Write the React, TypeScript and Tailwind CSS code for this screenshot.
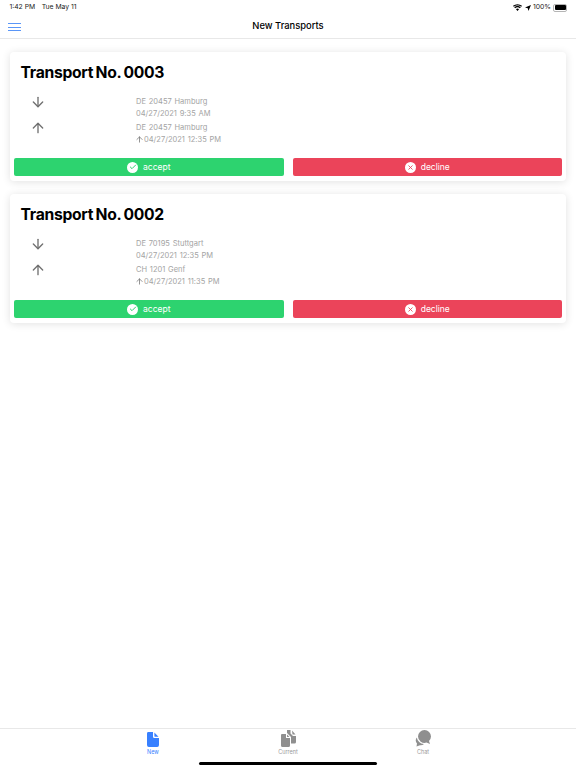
import { ArrowDown, ArrowUp, Check, X } from 'lucide-react';

type Transport = {
  no: string;
  from: string;
  fromTime: string;
  to: string;
  toTime: string;
};

const transports: Transport[] = [
  {
    no: '0003',
    from: 'DE 20457 Hamburg',
    fromTime: '04/27/2021 9:35 AM',
    to: 'DE 20457 Hamburg',
    toTime: '04/27/2021 12:35 PM',
  },
  {
    no: '0002',
    from: 'DE 70195 Stuttgart',
    fromTime: '04/27/2021 12:35 PM',
    to: 'CH 1201 Genf',
    toTime: '04/27/2021 11:35 PM',
  },
];

function StatusBar() {
  return (
    <div className="flex h-[13px] items-center justify-between pl-[9.5px] pr-[9px] pt-[2px] text-[6.8px] text-[#222]">
      <div className="flex gap-[6.5px]">
        <span>1:42 PM</span>
        <span>Tue May 11</span>
      </div>
      <div className="flex items-center gap-[2px]">
        <svg width="9" height="7" viewBox="0 0 18 14" fill="black" aria-hidden="true">
          <path d="M9 14 L6 10.5 A4.5 4.5 0 0 1 12 10.5 Z M4.3 8.7 L2.5 6.6 A9.5 9.5 0 0 1 15.5 6.6 L13.7 8.7 A7 7 0 0 0 4.3 8.7 Z M1.4 5.4 L0 3.6 A14 14 0 0 1 18 3.6 L16.6 5.4 A12 12 0 0 0 1.4 5.4 Z" />
        </svg>
        <svg width="6" height="6" viewBox="0 0 14 14" fill="black" className="ml-[1px]" aria-hidden="true">
          <path d="M14 0 L8 14 L6.5 7.5 L0 6 Z" />
        </svg>
        <span>100%</span>
        <div className="flex items-center rounded-[2px] border border-[#b5b5b5] p-[0.5px]">
          <div className="h-[5px] w-[11px] rounded-[1px] bg-black" />
        </div>
      </div>
    </div>
  );
}

function Header() {
  return (
    <div className="relative flex h-[26px] items-center justify-center border-b border-[#e8e8e8] pt-[1px]">
      <div className="absolute left-[8px] top-[10px] flex w-[13px] flex-col gap-[2.5px]">
        <div className="h-[1px] bg-[#5a96f7]" />
        <div className="h-[1px] bg-[#5a96f7]" />
        <div className="h-[1px] bg-[#5a96f7]" />
      </div>
      <span className="text-[9.4px] font-medium text-black">New Transports</span>
    </div>
  );
}

function TransportCard({ transport }: { transport: Transport }) {
  return (
    <div className="rounded-[4px] bg-white pb-[5px] shadow-[0_1px_8px_rgba(0,0,0,0.12)]">
      <h2 className="pl-[10.5px] pt-[10px] text-[15.7px] leading-[22px] font-bold tracking-[-0.3px] [word-spacing:-1px] text-black">
        Transport No. {transport.no}
      </h2>
      <div className="mt-[12px] flex flex-col gap-[3px] text-[7.5px] leading-[11.5px] tracking-[0.02px] [word-spacing:0.6px] text-[#a3a3a3]">
        <div className="grid grid-cols-[126px_1fr]">
          <div className="-mt-[2px] pl-[20px]">
            <ArrowDown size={16} strokeWidth={2} className="text-[#707070]" />
          </div>
          <div>
            <div>{transport.from}</div>
            <div>{transport.fromTime}</div>
          </div>
        </div>
        <div className="grid grid-cols-[126px_1fr]">
          <div className="-mt-[2px] pl-[20px]">
            <ArrowUp size={16} strokeWidth={2} className="text-[#707070]" />
          </div>
          <div>
            <div>{transport.to}</div>
            <div className="-ml-[1px] flex items-center">
              <ArrowUp size={9} strokeWidth={2} className="text-[#707070]" />
              <span>{transport.toTime}</span>
            </div>
          </div>
        </div>
      </div>
      <div className="mt-[13px] grid grid-cols-2 gap-[9px] px-[4px] text-[8.5px] text-white">
        <div className="flex h-[18px] items-center justify-center gap-[5px] rounded-[2px] bg-[#2dd36f]">
          <div className="flex h-[11px] w-[11px] items-center justify-center rounded-full bg-white">
            <Check size={8} strokeWidth={3} className="text-[#2dd36f]" />
          </div>
          <span>accept</span>
        </div>
        <div className="flex h-[18px] items-center justify-center gap-[5px] rounded-[2px] bg-[#eb445a]">
          <div className="flex h-[11px] w-[11px] items-center justify-center rounded-full bg-white">
            <X size={7} strokeWidth={3} className="text-[#eb445a]" />
          </div>
          <span>decline</span>
        </div>
      </div>
    </div>
  );
}

function TabBar() {
  return (
    <div className="relative flex h-[40px] justify-center border-t border-[#e8e8e8] bg-white text-[5.5px] leading-[7px] text-[#9a9a9a]">
      <div className="flex w-[135px] flex-col items-center pt-[3px] text-[#3880ff]">
        <svg width="12" height="15" viewBox="0 0 13 16" fill="#3880ff" aria-hidden="true">
          <path d="M1.5 0 H6.5 V5 A1.5 1.5 0 0 0 8 6.5 H13 V14 A2 2 0 0 1 11 16 H2 A2 2 0 0 1 0 14 V1.5 A1.5 1.5 0 0 1 1.5 0 Z M8 0.5 L12.5 5 H8.5 A0.5 0.5 0 0 1 8 4.5 Z" />
        </svg>
        <span className="mt-[2px]">New</span>
      </div>
      <div className="flex w-[135px] flex-col items-center pt-[1px]">
        <svg width="15" height="17" viewBox="0 0 15 17" fill="#8f8f8f" aria-hidden="true">
          <path d="M6 0 H9.5 V3.5 L12 6 H15 V12 A1.5 1.5 0 0 1 13.5 13.5 H10 V7 L6 3 Z M11 0.5 L14.5 4.5 H11.5 Z" />
          <path d="M1 4 H5 V8 H9 V15.5 A1.5 1.5 0 0 1 7.5 17 H1.5 A1.5 1.5 0 0 1 0 15.5 V5 A1 1 0 0 1 1 4 Z M6 4.5 L8.5 7 H6 Z" />
        </svg>
        <span className="mt-[2px]">Current</span>
      </div>
      <div className="flex w-[135px] flex-col items-center pt-[1px]">
        <svg width="16" height="17" viewBox="0 0 16 17" fill="#8f8f8f" aria-hidden="true">
          <path d="M9.5 0 A6.5 6.5 0 0 1 16 6.5 A6.5 6.5 0 0 1 14 11 L15 14 L11.5 12.6 A6.5 6.5 0 0 1 3 6.5 A6.5 6.5 0 0 1 9.5 0 Z" />
          <path d="M1.8 7.5 A8 8 0 0 0 9 14 A5 5 0 0 1 5 15.2 L1.5 16.6 L2 13.6 A5 5 0 0 1 1.8 7.5 Z" />
        </svg>
        <span className="mt-[2px]">Chat</span>
      </div>
      <div className="absolute bottom-[3px] left-[199px] h-[3px] w-[178px] rounded-full bg-black" />
    </div>
  );
}

export default function App() {
  return (
    <div className="flex h-[768px] flex-col bg-white font-['Inter','Liberation_Sans',sans-serif]">
      <StatusBar />
      <Header />
      <div className="flex flex-1 flex-col gap-[13px] px-[10px] pt-[13px]">
        {transports.map((t) => (
          <TransportCard key={t.no} transport={t} />
        ))}
      </div>
      <TabBar />
    </div>
  );
}
